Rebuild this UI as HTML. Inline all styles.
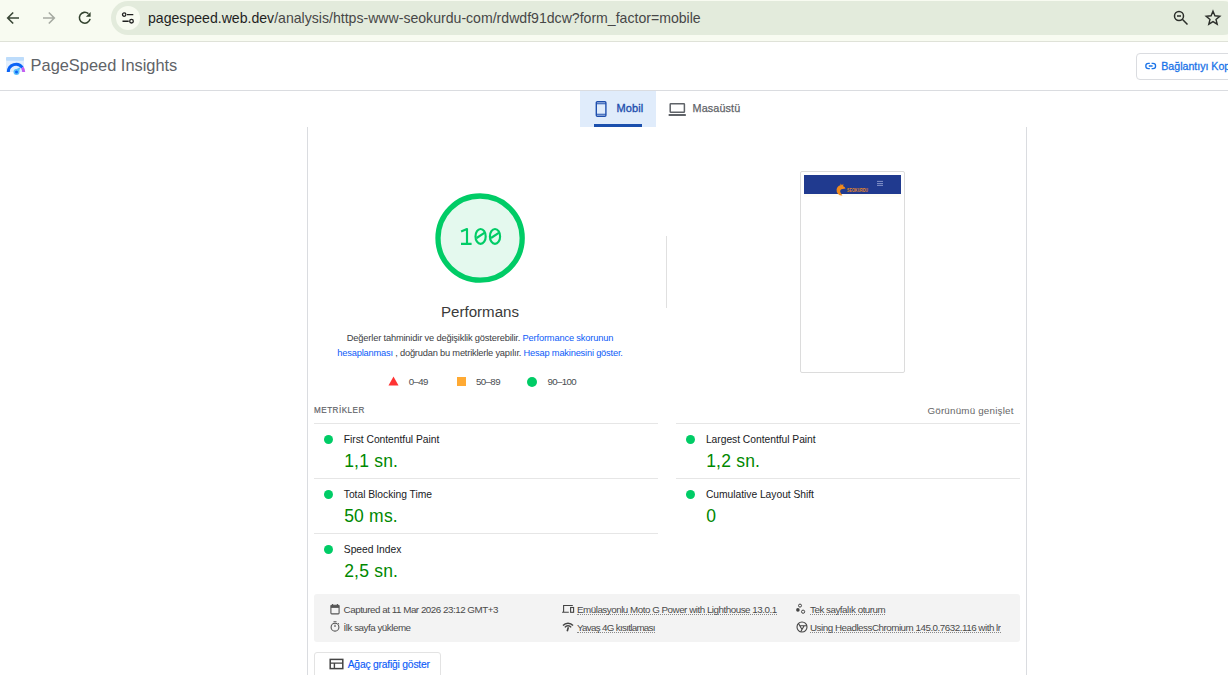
<!DOCTYPE html>
<html><head><meta charset="utf-8">
<style>
*{margin:0;padding:0;box-sizing:border-box}
html,body{width:1228px;height:675px;overflow:hidden;background:#fff;font-family:"Liberation Sans",sans-serif}
.a{position:absolute;white-space:nowrap}
.t{position:absolute;white-space:nowrap;line-height:1}
#bar{position:absolute;left:0;top:0;width:1228px;height:42px;background:#f8fbf1;border-bottom:1px solid #dfe2d8}
#pill{position:absolute;left:111px;top:1px;width:1129px;height:34px;border-radius:17px;background:#e3ebdc}
#tune{position:absolute;left:116px;top:6px;width:24px;height:24px;border-radius:12px;background:#f8fbf1}
#hdr{position:absolute;left:0;top:42px;width:1228px;height:49px;border-bottom:1px solid #dadce0;background:#fff}
#card{position:absolute;left:307px;top:127px;width:720px;height:560px;border-left:1px solid #dadce0;border-right:1px solid #dadce0}
.hr{position:absolute;height:1px;background:#e6e6e6}
.dot{position:absolute;width:9px;height:9px;border-radius:50%;background:#00cc66}
.lbl{font-size:10.3px;letter-spacing:-0.03px;color:#202124}
.val{font-size:17.5px;letter-spacing:0.2px;color:#008800}
.info{font-size:9.8px;letter-spacing:-0.48px;color:#4a4a4a}
.u{border-bottom:1px dotted #8a8a8a;height:10px}
</style></head><body>
<div id="bar">
  <svg class="a" style="left:6px;top:11px" width="14" height="14" viewBox="0 0 14 14"><path d="M13 7H2.2M7.2 1.5L1.7 7l5.5 5.5" fill="none" stroke="#3a4737" stroke-width="1.6"/></svg>
  <svg class="a" style="left:42px;top:11px" width="14" height="14" viewBox="0 0 14 14"><path d="M1 7h10.8M6.8 1.5L12.3 7l-5.5 5.5" fill="none" stroke="#a6aaa2" stroke-width="1.6"/></svg>
  <svg class="a" style="left:74px;top:6px" width="24" height="24" viewBox="0 0 24 24"><path d="M16.1 12.8A5.4 5.4 0 1 1 14.4 7.7" fill="none" stroke="#33422f" stroke-width="1.55"/><path d="M16.6 6.1V10.8H11.9z" fill="#33422f"/></svg>
  <div id="pill"></div>
  <div id="tune"></div>
  <svg class="a" style="left:121px;top:11px" width="14" height="14" viewBox="0 0 14 14"><circle cx="3.2" cy="3.6" r="1.7" fill="none" stroke="#1f1f1f" stroke-width="1.3"/><path d="M6 3.6h6.3M1.5 10.2h6.2" stroke="#1f1f1f" stroke-width="1.4"/><circle cx="10.5" cy="10.2" r="1.8" fill="none" stroke="#1f1f1f" stroke-width="1.3"/></svg>
  <div class="t" style="left:148px;top:10.9px;font-size:14.1px;color:#1f1f1f">pagespeed.web.dev<span style="color:#474747">/analysis/https-www-seokurdu-com/rdwdf91dcw?form_factor=mobile</span></div>
  <svg class="a" style="left:1172px;top:9px" width="18" height="18" viewBox="0 0 18 18"><circle cx="7" cy="7" r="4.5" fill="none" stroke="#2b2e2a" stroke-width="1.5"/><path d="M5 7h4M10.3 10.3l5.2 5.2" stroke="#2b2e2a" stroke-width="1.5"/></svg>
  <svg class="a" style="left:1204px;top:9px" width="18" height="18" viewBox="0 0 18 18"><path d="M9 2.2l1.9 4.6 4.9.4-3.8 3.2 1.2 4.8L9 12.6l-4.2 2.6 1.2-4.8-3.8-3.2 4.9-.4z" fill="none" stroke="#2b2e2a" stroke-width="1.4" stroke-linejoin="miter"/></svg>
</div>
<div id="hdr"></div>
<svg class="a" style="left:2px;top:52px" width="26" height="26" viewBox="0 0 26 26">
  <rect x="4" y="5" width="18" height="15" rx="1" fill="#e3effd"/>
  <rect x="4" y="5" width="18" height="3.7" rx="1" fill="#bddcfb"/>
  <path d="M6.3 20A7.7 7.7 0 0 1 20.3 15.6" fill="none" stroke="#0b63f6" stroke-width="3"/>
  <path d="M20.3 15.6A7.7 7.7 0 0 1 21.7 20" fill="none" stroke="#c35ef0" stroke-width="3"/>
  <path d="M12.5 18L18.6 15L16.2 21.5z" fill="#5cc0fb"/>
  <circle cx="14.5" cy="20" r="3" fill="#5cc0fb"/>
  <circle cx="14.5" cy="20" r="1.5" fill="#0b63f6"/>
</svg>
<div class="t" style="left:30.6px;top:56.7px;font-size:16.4px;color:#5f6368">PageSpeed Insights</div>
<div class="a" style="left:1136px;top:53px;width:120px;height:27px;border:1px solid #dadce0;border-radius:4px;background:#fff"></div>
<svg class="a" style="left:1145px;top:62px" width="12" height="8" viewBox="0 0 12 8"><path d="M4.8 1.4H3.4a2.6 2.6 0 0 0 0 5.2h1.4M6.6 1.4h1.4a2.6 2.6 0 0 1 0 5.2H6.6M3.8 4h3.8" fill="none" stroke="#1a73e8" stroke-width="1.3"/></svg>
<div class="t" style="left:1161.3px;top:61.4px;font-size:10.6px;-webkit-text-stroke:0.3px #1a73e8;color:#1a73e8">Bağlantıyı Kopyala</div>

<div class="a" style="left:580px;top:91px;width:76px;height:36px;background:#e0ecfb"></div>
<div class="a" style="left:594px;top:124px;width:48px;height:3px;background:#1a4fad"></div>
<svg class="a" style="left:595px;top:100px" width="12" height="18" viewBox="0 0 12 18"><rect x="1.3" y="1.7" width="9.6" height="14.6" rx="1" fill="none" stroke="#1f4fae" stroke-width="1.4"/><path d="M1.3 3.8h9.6M1.3 14.2h9.6" stroke="#1f4fae" stroke-width="1.1"/></svg>
<div class="t" style="left:616.4px;top:103.4px;font-size:11px;letter-spacing:0.12px;-webkit-text-stroke:0.35px #1f4fae;color:#1f4fae">Mobil</div>
<svg class="a" style="left:668px;top:102px" width="18" height="15" viewBox="0 0 18 15"><rect x="2.2" y="1.75" width="14.2" height="8.6" rx="0.6" fill="none" stroke="#5f6368" stroke-width="1.5"/><rect x="0.6" y="12.1" width="17.3" height="1.9" rx="0.5" fill="#5f6368"/></svg>
<div class="t" style="left:692.6px;top:103.1px;font-size:10.8px;letter-spacing:0.12px;-webkit-text-stroke:0.25px #5f6368;color:#5f6368">Masaüstü</div>

<div id="card"></div>

<svg class="a" style="left:435px;top:193px" width="90" height="90" viewBox="0 0 90 90"><circle cx="45.1" cy="45.1" r="42.1" fill="#e4f9ee" stroke="#00cc66" stroke-width="5.3"/></svg>
<svg class="a" style="left:455px;top:222px" width="50" height="28" viewBox="0 0 50 28"><g fill="none" stroke="#00cc66" stroke-width="2.15" stroke-linejoin="round">
<path d="M6.1 9.6L12 7V22M6 21.8H16.6"/>
<ellipse cx="25.6" cy="14.4" rx="5.1" ry="7.4"/><path d="M21.6 16L29.4 10.9"/>
<ellipse cx="40" cy="14.4" rx="5.1" ry="7.4"/><path d="M36 16L43.8 10.9"/>
</g></svg>
<div class="t" style="left:330px;width:300px;text-align:center;top:304.3px;font-size:15.1px;color:#3a3a3a">Performans</div>
<div class="t" style="left:330px;width:300px;text-align:center;top:334.1px;font-size:9.3px;letter-spacing:-0.17px;color:#3c4043">Değerler tahminidir ve değişiklik gösterebilir. <span style="color:#0d5cf8">Performance skorunun</span></div>
<div class="t" style="left:330px;width:300px;text-align:center;top:348.9px;font-size:9.3px;letter-spacing:-0.2px;color:#3c4043"><span style="color:#0d5cf8">hesaplanması</span> , doğrudan bu metriklerle yapılır. <span style="color:#0d5cf8">Hesap makinesini göster.</span></div>
<svg class="a" style="left:388px;top:376px" width="11" height="10" viewBox="0 0 11 10"><path d="M5.5 0.5L10.5 9.5H0.5z" fill="#ff3333"/></svg>
<div class="t" style="left:408.7px;top:376.9px;font-size:9.7px;letter-spacing:-0.6px;color:#4a4d51">0–49</div>
<div class="a" style="left:457px;top:377px;width:9px;height:9px;background:#ffaa33"></div>
<div class="t" style="left:476px;top:376.9px;font-size:9.7px;letter-spacing:-0.6px;color:#4a4d51">50–89</div>
<div class="a" style="left:527px;top:376.5px;width:10px;height:10px;border-radius:50%;background:#00cc66"></div>
<div class="t" style="left:547.4px;top:376.9px;font-size:9.7px;letter-spacing:-0.6px;color:#4a4d51">90–100</div>
<div class="a" style="left:666px;top:236px;width:1px;height:72px;background:#e0e0e0"></div>

<div class="a" style="left:800px;top:171px;width:105px;height:202px;border:1px solid #dcdcdc;border-radius:2px;background:#fff"></div>
<div class="a" style="left:804px;top:175px;width:97px;height:19px;background:#203a8f"></div>
<div class="a" style="left:804px;top:194px;width:97px;height:3px;background:#fdfcf7"></div>
<svg class="a" style="left:834px;top:181px" width="38" height="18" viewBox="0 0 38 18">
  <path d="M6.5 2.5L8 4.2L9.3 2.8L9.2 5.3A4.2 4.2 0 0 1 11.5 7.5L8.6 7.9A2.4 2.4 0 0 0 6.5 11.5L8.4 14.5A5.2 5.2 0 0 1 2.6 8.6A5.2 5.2 0 0 1 6.5 4.3z" fill="#f08a1c"/>
  <text x="13" y="10.5" font-family="Liberation Sans" font-size="4.8" font-weight="bold" fill="#e98a1f" textLength="21" lengthAdjust="spacingAndGlyphs">SEOKURDU</text>
</svg>
<svg class="a" style="left:876px;top:180px" width="8" height="7" viewBox="0 0 8 7"><path d="M1 1.4H7M1 3.6H7M1 5.4H7" stroke="#9aa8d8" stroke-width="0.8"/></svg>

<div class="t" style="left:313.9px;top:405.2px;font-size:9.9px;letter-spacing:0.6px;-webkit-text-stroke:0.2px #5f6368;color:#5f6368;transform:scaleX(0.82);transform-origin:0 0">METRİKLER</div>
<div class="t" style="left:826px;width:187.6px;text-align:right;top:405.6px;font-size:9.8px;letter-spacing:0.2px;color:#666">Görünümü genişlet</div>
<div class="hr" style="left:314px;top:423px;width:344px"></div>
<div class="hr" style="left:676px;top:423px;width:344px"></div>
<div class="hr" style="left:314px;top:478px;width:344px"></div>
<div class="hr" style="left:676px;top:478px;width:344px"></div>
<div class="hr" style="left:314px;top:533px;width:344px"></div>

<div class="dot" style="left:324px;top:435px"></div>
<div class="t lbl" style="left:343.8px;top:434.7px">First Contentful Paint</div>
<div class="t val" style="left:344.2px;top:453.3px">1,1 sn.</div>
<div class="dot" style="left:686px;top:435px"></div>
<div class="t lbl" style="left:705.9px;top:434.7px">Largest Contentful Paint</div>
<div class="t val" style="left:706.2px;top:453.3px">1,2 sn.</div>

<div class="dot" style="left:324px;top:490px"></div>
<div class="t lbl" style="left:343.8px;top:489.7px">Total Blocking Time</div>
<div class="t val" style="left:344.2px;top:508.3px">50 ms.</div>
<div class="dot" style="left:686px;top:490px"></div>
<div class="t lbl" style="left:705.9px;top:489.7px">Cumulative Layout Shift</div>
<div class="t val" style="left:706.2px;top:508.3px">0</div>

<div class="dot" style="left:324px;top:545px"></div>
<div class="t lbl" style="left:343.8px;top:544.7px">Speed Index</div>
<div class="t val" style="left:344.2px;top:563.3px">2,5 sn.</div>

<div class="a" style="left:314px;top:594px;width:706px;height:48px;background:#f3f3f3;border-radius:3px"></div>
<svg class="a" style="left:330px;top:603px" width="10" height="12" viewBox="0 0 10 12"><rect x="0.9" y="2.3" width="8.2" height="8.6" rx="0.8" fill="none" stroke="#555" stroke-width="1.1"/><rect x="0.9" y="2.3" width="8.2" height="2.6" fill="#555"/><path d="M2.6 1v2M7.4 1v2" stroke="#555" stroke-width="1.1"/></svg>
<div class="t info" style="left:343.6px;top:604.8px">Captured at 11 Mar 2026 23:12 GMT+3</div>
<svg class="a" style="left:330px;top:620px" width="10" height="13" viewBox="0 0 10 13"><circle cx="5" cy="7.2" r="3.9" fill="none" stroke="#555" stroke-width="1.1"/><path d="M3.5 1.8h3M5 4.8v2.3" stroke="#555" stroke-width="1.1"/><path d="M8.2 3.2l0.9 0.9" stroke="#555" stroke-width="1"/></svg>
<div class="t info" style="left:343.6px;top:623.2px">İlk sayfa yükleme</div>

<svg class="a" style="left:555px;top:600px" width="22" height="16" viewBox="0 0 22 16"><path d="M8.6 12V5.5H17.8M7.1 12.2H13.8" fill="none" stroke="#444" stroke-width="1.1"/><rect x="15.6" y="7.5" width="3" height="4.8" fill="none" stroke="#444" stroke-width="1.1"/></svg>
<div class="t info u" style="left:577px;top:604.8px">Emülasyonlu Moto G Power with Lighthouse 13.0.1</div>
<svg class="a" style="left:562px;top:622px" width="12" height="10" viewBox="0 0 12 10"><path d="M1 3.6A6.6 6.6 0 0 1 11 3.6M2.9 5.4A3.9 3.9 0 0 1 9.1 5.4" fill="none" stroke="#444" stroke-width="1.5"/><path d="M6.4 5.2L5.2 9.3" stroke="#444" stroke-width="1.6"/></svg>
<div class="t info u" style="left:577px;top:623.2px;letter-spacing:-0.7px">Yavaş 4G kısıtlaması</div>

<svg class="a" style="left:795px;top:603px" width="11" height="12" viewBox="0 0 11 12"><circle cx="5" cy="2.6" r="1.5" fill="none" stroke="#444" stroke-width="1"/><circle cx="2.9" cy="6.9" r="1.8" fill="#444"/><circle cx="8.1" cy="8.7" r="1.6" fill="none" stroke="#444" stroke-width="1"/></svg>
<div class="t info u" style="left:810px;top:604.8px">Tek sayfalık oturum</div>
<svg class="a" style="left:795.6px;top:621.2px" width="12" height="12" viewBox="0 0 12 12"><circle cx="6" cy="6" r="5" fill="none" stroke="#444" stroke-width="1.1"/><path d="M3.8 4.7H10.83M8.2 4.7L4.66 10.82M6 8.5L2.49 2.44" fill="none" stroke="#444" stroke-width="1.1"/></svg>
<div class="a" style="left:810px;top:620px;width:191px;height:16px;overflow:hidden"><div class="t info u" style="left:0;top:3.2px">Using HeadlessChromium 145.0.7632.116 with lr</div></div>

<div class="a" style="left:314px;top:652px;width:127px;height:30px;border:1px solid #e3e3e3;border-radius:3px;background:#fff"></div>
<svg class="a" style="left:329px;top:658px" width="15" height="12" viewBox="0 0 15 12"><rect x="1.2" y="1.4" width="12.6" height="9.2" fill="none" stroke="#444" stroke-width="1.5"/><path d="M1.2 5.1h12.6M5.4 5.1v5.5" stroke="#444" stroke-width="1.4"/></svg>
<div class="t" style="left:347.7px;top:660.1px;font-size:10.3px;letter-spacing:-0.2px;-webkit-text-stroke:0.15px #0d5cf8;color:#0d5cf8">Ağaç grafiği göster</div>
</body></html>
